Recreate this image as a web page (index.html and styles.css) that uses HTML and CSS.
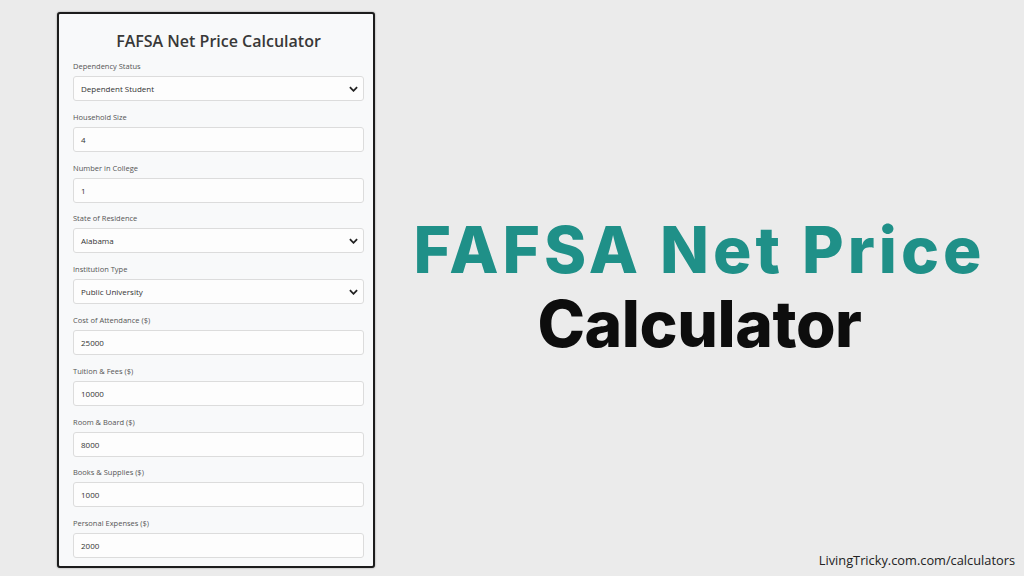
FILE: index.html
```html
<!DOCTYPE html>
<html>
<head>
<meta charset="utf-8">
<link rel="stylesheet" href="styles.css">
</head>
<body>
<div class="card">
  <h1 class="card-title">FAFSA Net Price Calculator</h1>
  <div class="field">
    <div class="label">Dependency Status</div>
    <div class="control select"><span>Dependent Student</span><svg class="chev" viewBox="0 0 10 6"><path d="M1 1l4 4 4-4" fill="none" stroke="#222" stroke-width="2"/></svg></div>
  </div>
  <div class="field">
    <div class="label">Household Size</div>
    <div class="control"><span>4</span></div>
  </div>
  <div class="field">
    <div class="label">Number in College</div>
    <div class="control"><span>1</span></div>
  </div>
  <div class="field">
    <div class="label">State of Residence</div>
    <div class="control select"><span>Alabama</span><svg class="chev" viewBox="0 0 10 6"><path d="M1 1l4 4 4-4" fill="none" stroke="#222" stroke-width="2"/></svg></div>
  </div>
  <div class="field">
    <div class="label">Institution Type</div>
    <div class="control select"><span>Public University</span><svg class="chev" viewBox="0 0 10 6"><path d="M1 1l4 4 4-4" fill="none" stroke="#222" stroke-width="2"/></svg></div>
  </div>
  <div class="field">
    <div class="label">Cost of Attendance ($)</div>
    <div class="control"><span>25000</span></div>
  </div>
  <div class="field">
    <div class="label">Tuition &amp; Fees ($)</div>
    <div class="control"><span>10000</span></div>
  </div>
  <div class="field">
    <div class="label">Room &amp; Board ($)</div>
    <div class="control"><span>8000</span></div>
  </div>
  <div class="field">
    <div class="label">Books &amp; Supplies ($)</div>
    <div class="control"><span>1000</span></div>
  </div>
  <div class="field">
    <div class="label">Personal Expenses ($)</div>
    <div class="control"><span>2000</span></div>
  </div>
</div>
<div class="side">
  <div class="headline">
    <div class="hl-teal">FAFSA Net Price</div>
    <div class="hl-black">Calculator</div>
  </div>
  <div class="footer">LivingTricky.com.com/calculators</div>
</div>
</body>
</html>
```

FILE: styles.css
```css
html, body {
  margin: 0;
  padding: 0;
}
body {
  width: 1024px;
  height: 576px;
  background: #ebebeb;
  display: flex;
  box-sizing: border-box;
  padding: 12px 0 8px 57px;
  font-family: "Open Sans", "Liberation Sans", sans-serif;
  overflow: hidden;
}
.card {
  width: 318px;
  height: 556px;
  box-sizing: border-box;
  border: 2px solid #1c1c1c;
  border-radius: 3px;
  box-shadow: 0 0 2px rgba(0,0,0,0.4);
  background: #f8f9fa;
  padding: 15px 9px 0 14px;
  overflow: hidden;
}
.card-title {
  margin: 0 0 8px;
  font-size: 16px;
  line-height: 24px;
  font-weight: 600;
  color: #383838;
  text-align: center;
}
.field {
  margin-bottom: 10.8px;
}
.label {
  font-size: 7.5px;
  line-height: 10px;
  color: #555;
  margin-bottom: 5px;
}
.control {
  height: 25px;
  box-sizing: border-box;
  border: 1px solid #dcdcdc;
  border-radius: 3px;
  background: #fdfdfd;
  display: flex;
  align-items: center;
  justify-content: space-between;
  padding: 0 5px 0 7px;
  font-size: 8px;
  color: #333;
}
.chev {
  width: 9px;
  height: 6px;
}
.side {
  flex: 1;
  display: flex;
  flex-direction: column;
}
.headline {
  flex: 1;
  display: flex;
  flex-direction: column;
  justify-content: center;
  align-items: center;
  padding-top: 10px;
  font-family: "Inter", "Liberation Sans", sans-serif;
  font-weight: 800;
  font-size: 64px;
  line-height: 74px;
}
.hl-teal {
  color: #1f9088;
  letter-spacing: 4px;
}
.hl-black {
  color: #0d0d0d;
  letter-spacing: -0.4px;
}
.footer {
  align-self: flex-end;
  margin-right: 9px;
  font-size: 12.8px;
  line-height: 16px;
  color: #222;
}
```
